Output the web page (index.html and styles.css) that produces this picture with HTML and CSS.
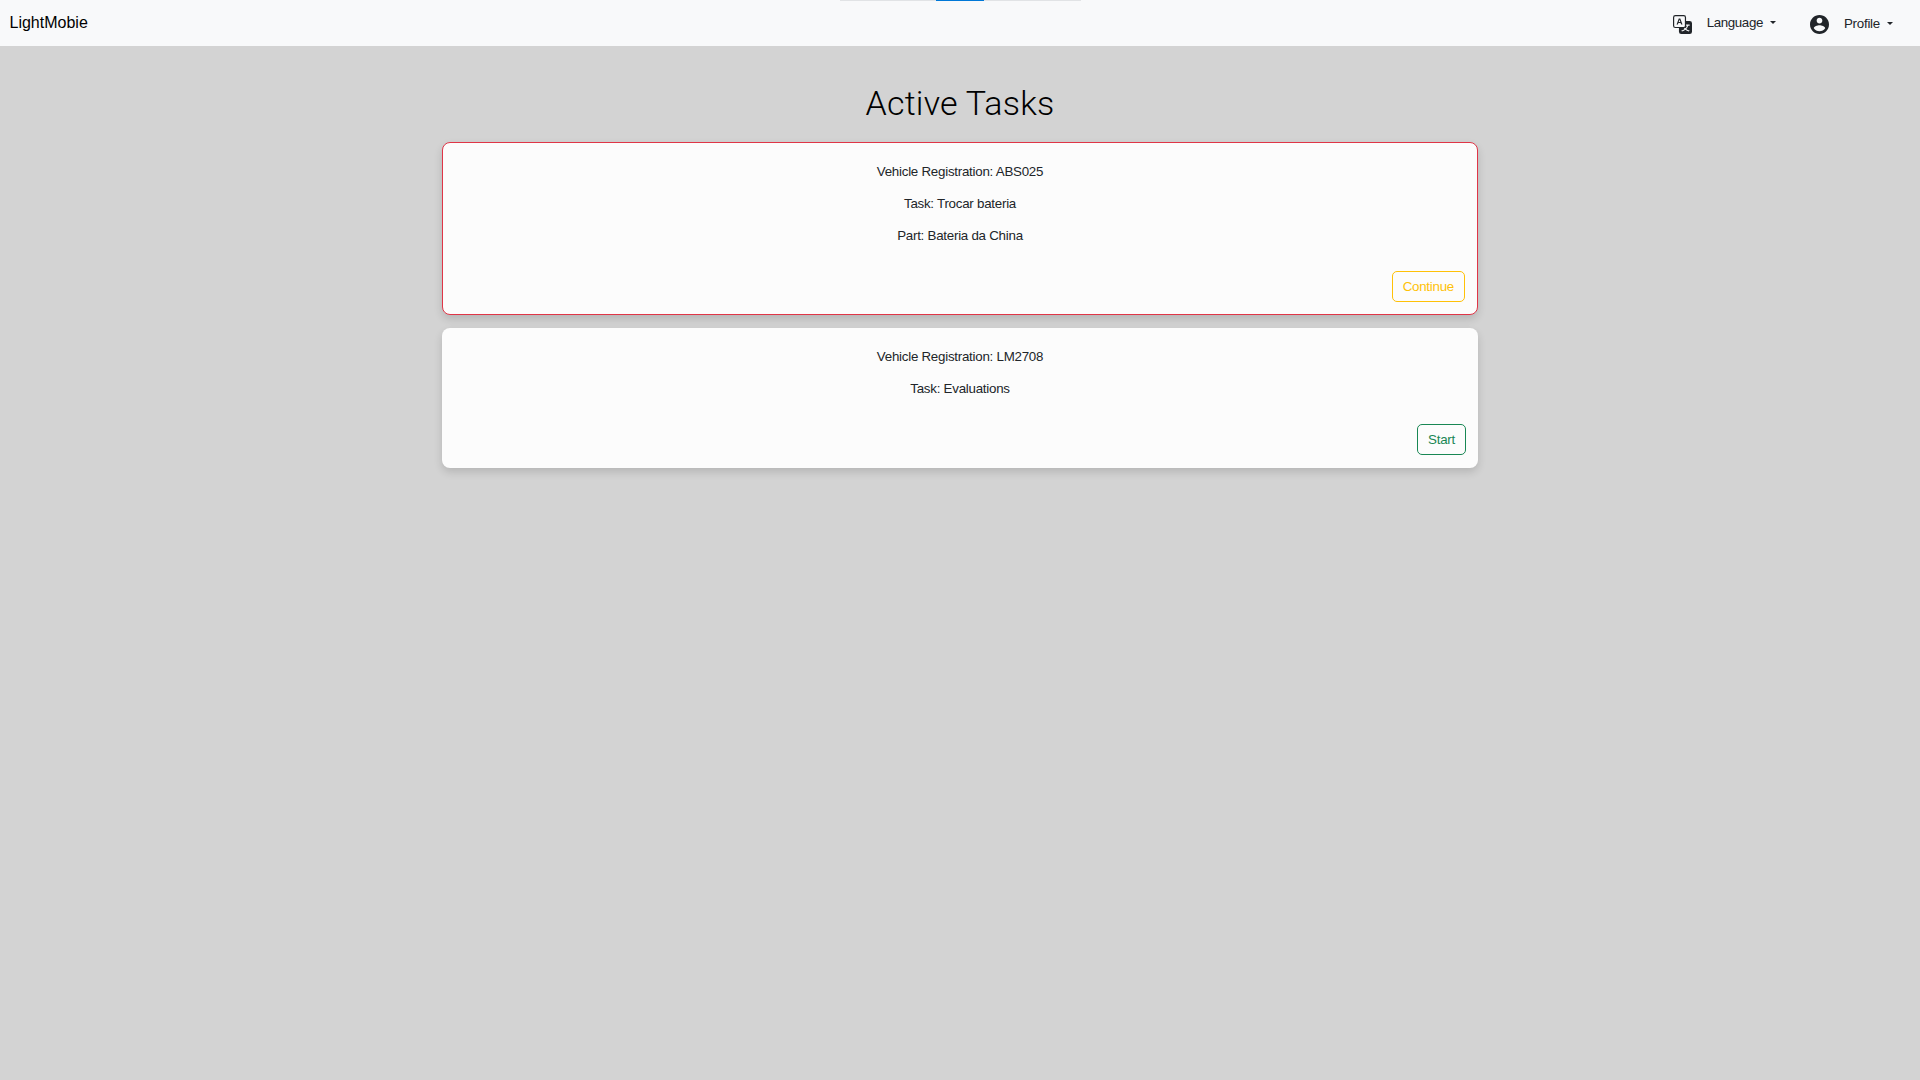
FILE: index.html
```html
<!DOCTYPE html>
<html lang="en">
<head>
<meta charset="utf-8">
<title>LightMobie</title>
<link rel="stylesheet" href="styles.css">
</head>
<body>
<div class="loader"><div class="loader-bar"></div></div>
<nav class="navbar">
  <a class="brand">LightMobie</a>
  <div class="menu language">
    <svg class="icon" viewBox="0 0 16 16" fill="currentColor"><path d="M4.545 6.714 4.11 8H3l1.862-5h1.284L8 8H6.833l-.435-1.286H4.545zm1.634-.736L5.5 3.956h-.049l-.679 2.022H6.18z"/><path d="M0 2a2 2 0 0 1 2-2h7a2 2 0 0 1 2 2v3h3a2 2 0 0 1 2 2v7a2 2 0 0 1-2 2H7a2 2 0 0 1-2-2v-3H2a2 2 0 0 1-2-2V2zm2-1a1 1 0 0 0-1 1v7a1 1 0 0 0 1 1h7a1 1 0 0 0 1-1V2a1 1 0 0 0-1-1H2zm7.138 9.995c.193.301.402.583.63.846-.748.575-1.673 1.001-2.768 1.292.178.217.451.635.555.867 1.125-.359 2.08-.844 2.886-1.494.777.665 1.739 1.165 2.93 1.472.133-.254.414-.673.629-.89-1.125-.253-2.057-.694-2.82-1.284.681-.747 1.222-1.651 1.621-2.757H14V8h-3v1.047h.765c-.318.844-.74 1.546-1.272 2.13a6.066 6.066 0 0 1-.415-.492 1.988 1.988 0 0 1-.94.31z"/></svg>
    <span class="menu-label">Language</span><span class="caret"></span>
  </div>
  <div class="menu profile">
    <svg class="icon" viewBox="2 2 20 20" fill="currentColor"><path d="M12 2C6.48 2 2 6.48 2 12s4.48 10 10 10 10-4.48 10-10S17.52 2 12 2zm0 3c1.66 0 3 1.34 3 3s-1.34 3-3 3-3-1.34-3-3 1.34-3 3-3zm0 14.2c-2.5 0-4.71-1.28-6-3.22.03-1.99 4-3.08 6-3.08 1.99 0 5.97 1.09 6 3.08-1.29 1.94-3.5 3.22-6 3.22z"/></svg>
    <span class="menu-label">Profile</span><span class="caret"></span>
  </div>
</nav>
<main class="tasks">
  <h1 class="title">Active Tasks</h1>
  <section class="card card-active">
    <p class="line">Vehicle Registration: ABS025</p>
    <p class="line">Task: Trocar bateria</p>
    <p class="line">Part: Bateria da China</p>
    <button class="btn btn-warning">Continue</button>
  </section>
  <section class="card">
    <p class="line">Vehicle Registration: LM2708</p>
    <p class="line">Task: Evaluations</p>
    <button class="btn btn-success">Start</button>
  </section>
</main>
</body>
</html>
```

FILE: styles.css
```css
* { box-sizing: border-box; }
body {
  margin: 0;
  min-height: 100vh;
  background: #d3d3d3;
  color: #212529;
  font-family: "Liberation Sans", Arial, sans-serif;
  font-size: 13.33px;
  letter-spacing: -.25px;
}
.loader {
  position: absolute;
  top: 0;
  left: 840px;
  width: 241px;
  height: 1px;
  background: #e1e3e5;
}
.loader-bar { width: 48px; height: 1px; margin-left: 96px; background: #0078d7; }
.navbar {
  display: flex;
  align-items: center;
  height: 46px;
  padding: 2px 27px 0 9.5px;
  background: #f8f9fa;
}
.brand { margin: -2px auto 0 0; font-size: 16px; line-height: 24px; letter-spacing: 0; color: #000; }
.menu { display: flex; align-items: center; height: 20px; padding-top: 1px; line-height: 20px; }
.language { margin-right: 34px; }
.icon { display: block; width: 19px; height: 19px; margin-right: 15px; }
.language .menu-label { margin-top: -3px; letter-spacing: -.38px; }
.profile .menu-label { margin-top: -1px; }
.caret {
  margin-left: 7px;
  margin-top: -3px;
  border-top: 3px solid;
  border-left: 3px solid transparent;
  border-right: 3px solid transparent;
}
.language .caret { margin-top: -5px; }
.tasks {
  display: flex;
  flex-direction: column;
  gap: 13px;
  width: 1036px;
  margin: 0 auto;
  padding-top: 37px;
}
.title {
  margin: 0;
  height: 46px;
  line-height: 40px;
  text-align: center;
  font-family: "Roboto Slab", Roboto, sans-serif;
  font-size: 34px;
  font-weight: 300;
  letter-spacing: .2px;
  color: #000;
}
.card {
  display: flex;
  flex-direction: column;
  align-items: center;
  gap: 12px;
  padding: 19px 12px 13px;
  border-radius: 8px;
  background: #fcfcfc;
  box-shadow: 0 4px 8px rgba(0, 0, 0, .14);
}
.card-active { padding-bottom: 12px; border: 1px solid #e03547; }
.line { margin: 0; line-height: 20px; }
.btn {
  align-self: flex-end;
  height: 31px;
  margin-top: 13px;
  padding: 0 10px;
  border: 1px solid;
  border-radius: 5px;
  background: transparent;
  font: inherit;
  letter-spacing: inherit;
}
.btn-warning { color: #ffc107; }
.btn-success { color: #198754; }
```
